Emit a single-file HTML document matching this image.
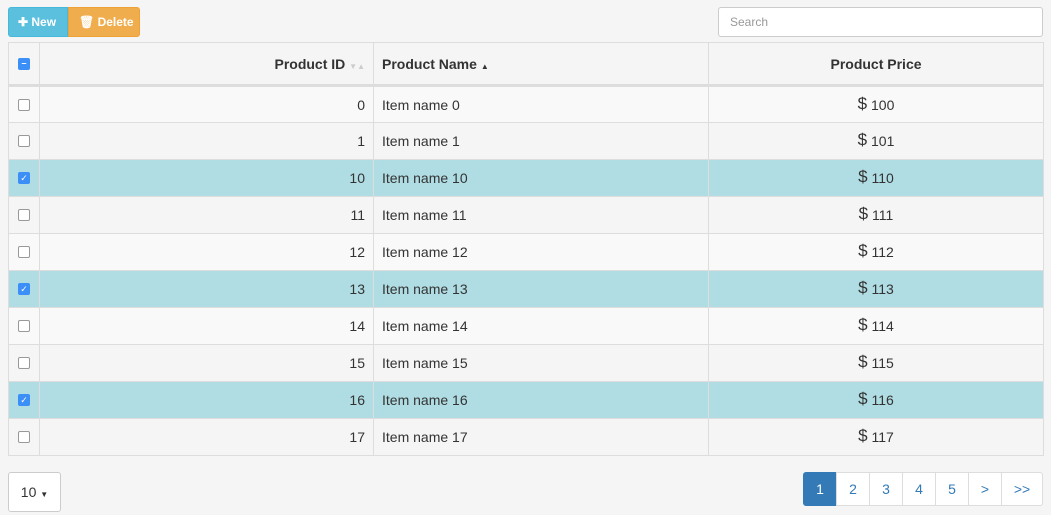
<!DOCTYPE html><html><head><style>
body{margin:0;background:#f5f5f5;font-family:"Liberation Sans",sans-serif;font-size:14px;color:#333;width:1051px;height:515px;position:relative;overflow:hidden}
.btn{position:absolute;top:7px;height:30px;color:#fff;font-size:12px;font-weight:bold;line-height:29px;box-sizing:border-box}
#new{left:8px;width:60px;background:#5bc0de;border:1px solid #46b8da;border-radius:3px 0 0 3px;padding-left:9px}
#del{left:68px;width:72px;background:#f0ad4e;border:1px solid #eea236;border-radius:0 3px 3px 0;padding-left:10px}
#search{position:absolute;left:718px;top:7px;width:325px;height:30px;box-sizing:border-box;border:1px solid #ccc;border-radius:3px;background:#fff;font-size:12px;color:#999;padding:7px 11px}
table{position:absolute;left:8px;top:42px;width:1036px;border-collapse:collapse;border:1px solid #ddd;table-layout:fixed}
th{height:43px;box-sizing:border-box;background:#f5f5f5;border-right:1px solid #ddd;border-bottom:3px solid #ddd;font-weight:bold;font-size:14px;padding:0 8px}
td{height:37px;border-right:1px solid #ddd;border-top:1px solid #ddd;padding:0 8px;box-sizing:border-box}
tr.o td{background:#f9f9f9}tr.e td{background:#f5f5f5}tr.s td{background:#b0dde3}
.cb{width:10px;height:10px;border:1px solid #999;border-radius:2px;background:#fff;margin:auto}
.ck{background:#3b8ff6;border-color:#3b8ff6;color:#fff;font-size:9px;line-height:10px;text-align:center}
.d{font-size:17px;position:relative;top:-1px}
.pg{position:absolute;top:472px;height:34px;box-sizing:border-box;border:1px solid #ddd;background:#fff;color:#337ab7;text-align:center;line-height:32px;font-size:14px}
</style></head><body>
<div class="btn" id="new">✚ New</div><div class="btn" id="del">🗑 Delete</div>
<div id="search">Search</div>
<table>
<colgroup><col style="width:31px"><col style="width:334px"><col style="width:335px"><col></colgroup>
<tr><th><div class="cb ck" style="line-height:9px">–</div></th><th style="text-align:right">Product ID <span style="color:#ccc;font-size:8px">▼▲</span></th><th style="text-align:left">Product Name <span style="font-size:8px">▲</span></th><th>Product Price</th></tr>
<tr class="o"><td><div class="cb"></div></td><td align="right">0</td><td>Item name 0</td><td align="center"><span class="d">$</span> 100</td></tr>
<tr class="e"><td><div class="cb"></div></td><td align="right">1</td><td>Item name 1</td><td align="center"><span class="d">$</span> 101</td></tr>
<tr class="s"><td><div class="cb ck">✓</div></td><td align="right">10</td><td>Item name 10</td><td align="center"><span class="d">$</span> 110</td></tr>
<tr class="e"><td><div class="cb"></div></td><td align="right">11</td><td>Item name 11</td><td align="center"><span class="d">$</span> 111</td></tr>
<tr class="o"><td><div class="cb"></div></td><td align="right">12</td><td>Item name 12</td><td align="center"><span class="d">$</span> 112</td></tr>
<tr class="s"><td><div class="cb ck">✓</div></td><td align="right">13</td><td>Item name 13</td><td align="center"><span class="d">$</span> 113</td></tr>
<tr class="o"><td><div class="cb"></div></td><td align="right">14</td><td>Item name 14</td><td align="center"><span class="d">$</span> 114</td></tr>
<tr class="e"><td><div class="cb"></div></td><td align="right">15</td><td>Item name 15</td><td align="center"><span class="d">$</span> 115</td></tr>
<tr class="s"><td><div class="cb ck">✓</div></td><td align="right">16</td><td>Item name 16</td><td align="center"><span class="d">$</span> 116</td></tr>
<tr class="e"><td><div class="cb"></div></td><td align="right">17</td><td>Item name 17</td><td align="center"><span class="d">$</span> 117</td></tr>
</table>
<div class="pg" style="left:8px;top:472px;width:53px;height:40px;line-height:38px;color:#333;border-color:#ccc;border-radius:3px">10 <span style="font-size:8px">▼</span></div>
<div class="pg" style="left:803px;width:34px;background:#337ab7;border-color:#337ab7;color:#fff;border-radius:3px 0 0 3px">1</div>
<div class="pg" style="left:836px;width:34px">2</div>
<div class="pg" style="left:869px;width:34px">3</div>
<div class="pg" style="left:902px;width:34px">4</div>
<div class="pg" style="left:935px;width:34px">5</div>
<div class="pg" style="left:968px;width:34px">&gt;</div>
<div class="pg" style="left:1001px;width:42px;border-radius:0 3px 3px 0">&gt;&gt;</div>
</body></html>
